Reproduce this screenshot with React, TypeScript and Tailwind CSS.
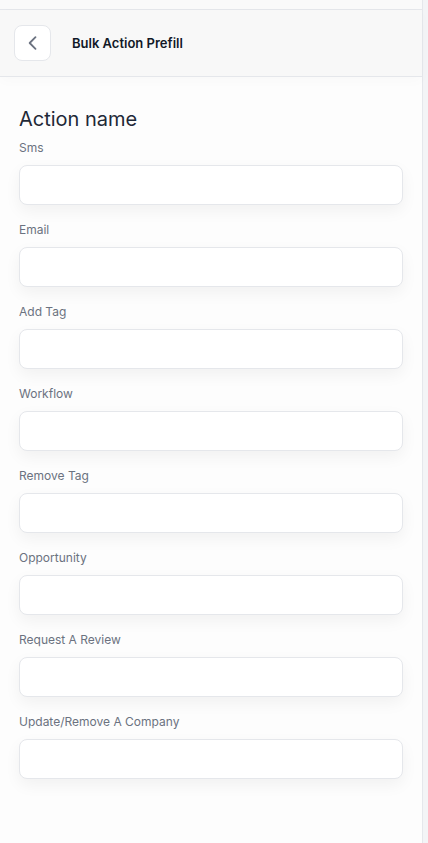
import React from "react";

const fields = [
  "Sms",
  "Email",
  "Add Tag",
  "Workflow",
  "Remove Tag",
  "Opportunity",
  "Request A Review",
  "Update/Remove A Company",
];

export default function App() {
  return (
    <div
      className="flex h-[843px] w-[428px] bg-[#f3f4f6]"
      style={{ fontFamily: "Inter, 'Noto Sans', sans-serif" }}
    >
      <div className="flex w-[423px] flex-col border-r border-[#e5e7eb] bg-[#fdfdfd]">
        <div className="h-[10px] border-b border-[#e5e7eb] bg-[#fafafa]" />
        <div className="flex h-[67px] items-center gap-[21px] border-b border-[#e5e7eb] bg-[#f8f8f8] pl-[14px] shadow-[0_4px_12px_rgba(0,0,0,0.02)]">
          <button className="flex h-[36px] w-[37px] items-center justify-center rounded-lg border border-[#e5e7eb] bg-white">
            <svg width="20" height="20" viewBox="0 0 24 24" fill="none" stroke="#6b7280" strokeWidth="2.2" strokeLinecap="round" strokeLinejoin="round">
              <path d="M15 5l-7 7 7 7" />
            </svg>
          </button>
          <span className="mt-[2px] text-[13px] font-semibold text-[#111827]">Bulk Action Prefill</span>
        </div>
        <div className="flex flex-col px-[19px] pt-[28px]">
          <h1 className="text-[20px] leading-[28px] text-[#1f2937]">Action name</h1>
          <div className="mt-[7px] flex flex-col gap-[17px]">
            {fields.map((f) => (
              <div key={f} className="flex flex-col">
                <label className="text-[12px] leading-[16px] text-[#6b7280]">{f}</label>
                <input
                  className="mt-[9px] h-[40px] w-[384px] rounded-lg border border-[#e5e7eb] bg-white shadow-[0_6px_16px_rgba(0,0,0,0.05)] outline-none"
                  type="text"
                />
              </div>
            ))}
          </div>
        </div>
      </div>
    </div>
  );
}
